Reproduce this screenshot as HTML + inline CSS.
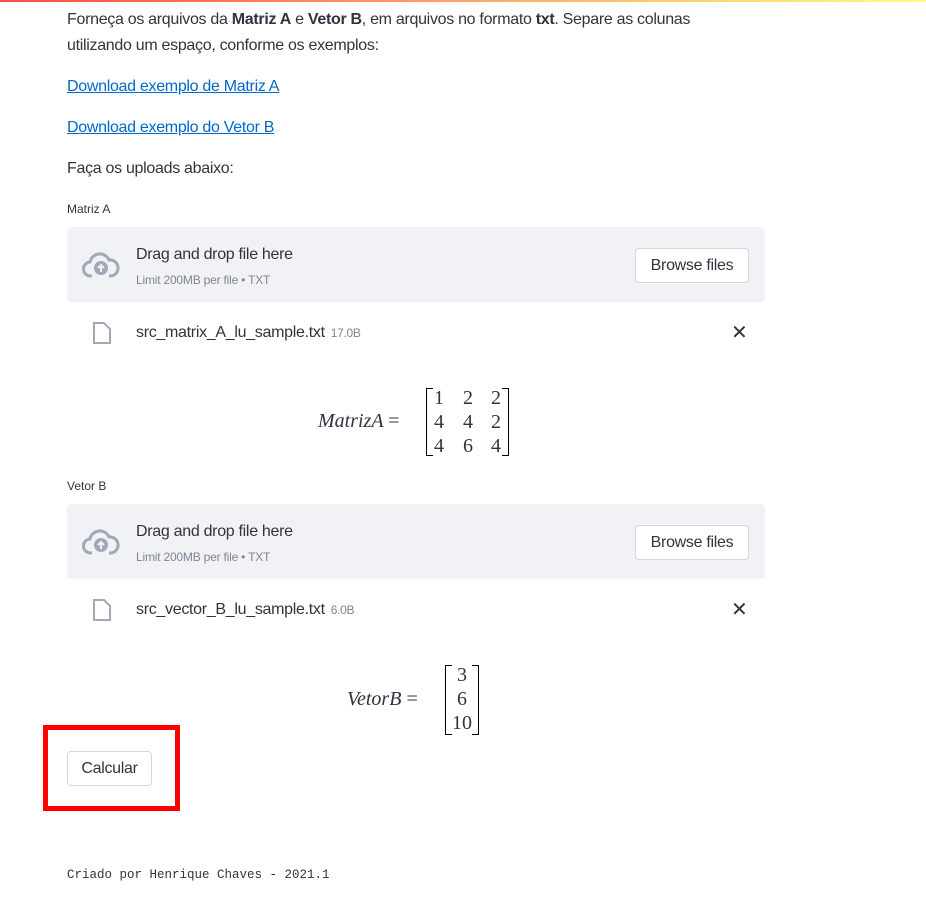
<!DOCTYPE html>
<html><head><meta charset="utf-8"><style>
body{margin:0;width:926px;height:915px;background:#fff;font-family:"Liberation Sans",sans-serif;color:#31333f;position:relative;overflow:hidden}
.bar{position:absolute;top:0;left:0;width:926px;height:2px;background:linear-gradient(90deg,#ff4b4b,#fffd80)}
.a{position:absolute;left:67px;font-size:16px;letter-spacing:-0.3px;white-space:nowrap}
a{color:#0068c9;text-decoration:underline}
.lbl{position:absolute;left:67px;font-size:12px}
.dz{position:absolute;left:67px;width:698px;height:75px;background:#f0f2f6;border-radius:4px}
.dz .t1{position:absolute;left:69px;top:19px;font-size:16px;letter-spacing:-0.3px}
.dz .t2{position:absolute;left:69px;top:46px;font-size:12px;color:#808495;letter-spacing:-0.2px}
.btn{position:absolute;background:#fff;border:1px solid #d6d6d9;border-radius:4px;font-size:16px;letter-spacing:-0.3px;display:flex;align-items:center;justify-content:center;box-sizing:border-box;color:#31333f}
.cloud{position:absolute;left:15px;top:23px}
.file{position:absolute;left:67px;width:698px;height:30px}
.file .n{position:absolute;left:69px;top:7px;font-size:16px;letter-spacing:-0.3px}
.file .n small{font-size:12px;color:#808495;margin-left:6px}
.file .x{position:absolute;left:664px;top:3px;font-size:20px}
.math{position:absolute;font-family:"Liberation Serif",serif;font-size:20px}
.bl{position:absolute;width:7px;border:1.5px solid #000;border-right:none;box-sizing:border-box}
.br{position:absolute;width:7px;border:1.5px solid #000;border-left:none;box-sizing:border-box}
</style></head><body>
<div class="bar"></div>
<div class="a" style="top:11px">Forneça os arquivos da <b>Matriz A</b> e <b>Vetor B</b>, em arquivos no formato <b>txt</b>. Separe as colunas</div>
<div class="a" style="top:37px">utilizando um espaço, conforme os exemplos:</div>
<div class="a" style="top:78px"><a>Download exemplo de Matriz A</a></div>
<div class="a" style="top:119px"><a>Download exemplo do Vetor B</a></div>
<div class="a" style="top:160px">Faça os uploads abaixo:</div>

<div class="lbl" style="top:202px">Matriz A</div>
<div class="dz" style="top:227px">
<svg class="cloud" width="38" height="30" viewBox="0 0 38 30"><path d="M10 26H9a7 7 0 0 1-1-14 10 10 0 0 1 19-2 8 8 0 0 1 2 16h-2" fill="none" stroke="#a3a8b8" stroke-width="3"/><circle cx="19" cy="18" r="7" fill="#a3a8b8"/><path d="M19 22v-7M16 18l3-3 3 3" stroke="#f0f2f6" stroke-width="2" fill="none"/></svg>
<div class="t1">Drag and drop file here</div><div class="t2">Limit 200MB per file • TXT</div>
<div class="btn" style="left:568px;top:21px;width:114px;height:35px">Browse files</div>
</div>
<div class="file" style="top:317px">
<svg style="position:absolute;left:25px;top:4px" width="20" height="24" viewBox="0 0 20 24"><path d="M2 2h10l6 6v14H2z" fill="none" stroke="#a3a8b8" stroke-width="2"/></svg>
<div class="n">src_matrix_A_lu_sample.txt<small>17.0B</small></div><div class="x">✕</div></div>

<div class="math" style="left:318px;top:410px;font-style:italic">MatrizA <span style="font-style:normal">=</span></div>
<div class="bl" style="left:426px;top:388px;height:68px"></div>
<div class="br" style="left:502px;top:388px;height:68px"></div>
<div class="math" style="left:434px;top:386px;line-height:24px">1<br>4<br>4</div>
<div class="math" style="left:463px;top:386px;line-height:24px">2<br>4<br>6</div>
<div class="math" style="left:491px;top:386px;line-height:24px">2<br>2<br>4</div>

<div class="lbl" style="top:479px">Vetor B</div>
<div class="dz" style="top:504px">
<svg class="cloud" width="38" height="30" viewBox="0 0 38 30"><path d="M10 26H9a7 7 0 0 1-1-14 10 10 0 0 1 19-2 8 8 0 0 1 2 16h-2" fill="none" stroke="#a3a8b8" stroke-width="3"/><circle cx="19" cy="18" r="7" fill="#a3a8b8"/><path d="M19 22v-7M16 18l3-3 3 3" stroke="#f0f2f6" stroke-width="2" fill="none"/></svg>
<div class="t1">Drag and drop file here</div><div class="t2">Limit 200MB per file • TXT</div>
<div class="btn" style="left:568px;top:21px;width:114px;height:35px">Browse files</div>
</div>
<div class="file" style="top:594px">
<svg style="position:absolute;left:25px;top:4px" width="20" height="24" viewBox="0 0 20 24"><path d="M2 2h10l6 6v14H2z" fill="none" stroke="#a3a8b8" stroke-width="2"/></svg>
<div class="n">src_vector_B_lu_sample.txt<small>6.0B</small></div><div class="x">✕</div></div>

<div class="math" style="left:347px;top:688px;font-style:italic">VetorB <span style="font-style:normal">=</span></div>
<div class="bl" style="left:445px;top:665px;height:70px"></div>
<div class="br" style="left:472px;top:665px;height:70px"></div>
<div class="math" style="left:451px;top:663px;line-height:24px;text-align:center;width:22px">3<br>6<br>10</div>

<div style="position:absolute;left:43px;top:725px;width:137px;height:86px;border:5px solid #f00;box-sizing:border-box"></div>
<div class="btn" style="left:67px;top:751px;width:85px;height:35px">Calcular</div>

<div style="position:absolute;left:67px;top:868px;font-family:'Liberation Mono',monospace;font-size:12.5px">Criado por Henrique Chaves - 2021.1</div>
</body></html>
